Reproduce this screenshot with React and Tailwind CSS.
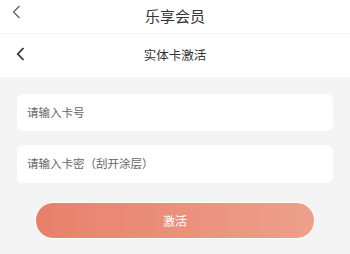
export default function App() {
  const font = { fontFamily: '"Noto Sans CJK SC", "Noto Sans", sans-serif' }
  return (
    <div className="h-[254px] w-[350px] overflow-hidden bg-[#f4f4f4]" style={font}>
      {/* outer header */}
      <div className="relative flex h-[33px] items-center justify-center bg-white">
        <svg className="absolute left-[12px] top-[5px]" width="9" height="14" viewBox="0 0 9 14" fill="none">
          <path d="M7.5 1 L1.5 7 L7.5 13" stroke="#555" strokeWidth="1.1" />
        </svg>
        <span className="text-[15px] text-[#333]">乐享会员</span>
      </div>
      <div className="h-px bg-[#f2f2f2]" />
      {/* inner header */}
      <div className="relative flex h-[43px] items-center justify-center bg-white">
        <svg className="absolute left-[16px] top-[13px]" width="9" height="14" viewBox="0 0 9 14" fill="none">
          <path d="M7.5 1 L1.8 7 L7.5 13" stroke="#333" strokeWidth="1.8" />
        </svg>
        <span className="text-[12.5px] text-[#333]">实体卡激活</span>
      </div>

      <div className="flex flex-col px-[17px] pt-[17px]">
        <div className="flex h-[37px] items-center rounded-[6px] bg-white px-[10px] text-[11.5px] text-[#666]">
          请输入卡号
        </div>
        <div className="mt-[14px] flex h-[38px] items-center rounded-[6px] bg-white px-[10px] text-[11.5px] text-[#666]">
          请输入卡密（刮开涂层）
        </div>
        <div className="mx-[18px] mt-[19px] flex h-[37px] items-center justify-center rounded-full border border-white bg-gradient-to-r from-[#e8806b] to-[#eda08b] text-[12px] text-white">
          激活
        </div>
      </div>
    </div>
  )
}
